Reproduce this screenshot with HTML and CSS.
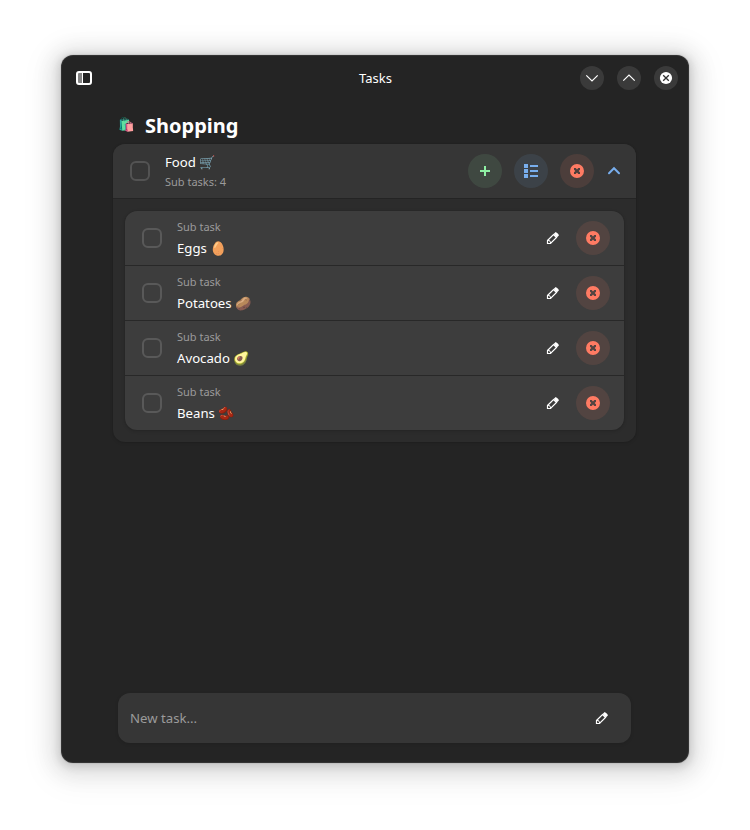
FILE: index.html
```html
<!DOCTYPE html>
<html lang="en">
<head>
<meta charset="utf-8">
<title>Tasks</title>
<link rel="stylesheet" href="styles.css">
</head>
<body>
<svg class="defs" width="0" height="0">
  <symbol id="pencil" viewBox="0 0 16 16">
    <path d="M2.500 10.500 8.500 4.500 11.500 7.500 5.500 13.500H2.500Z" fill="none" stroke="currentColor" stroke-width="1.200"/>
    <path d="M8.600 4.100 10.700 2 12.100 2.900 13.200 4 14 5.300 11.900 7.400Z" fill="currentColor"/>
    <path d="M2.800 10.200 4.700 10.700 5.800 13.200" fill="none" stroke="currentColor" stroke-width="1"/>
  </symbol>
  <symbol id="remove" viewBox="0 0 16 16">
    <path fill="currentColor" fill-rule="evenodd" d="M8 1a7 7 0 1 0 0 14A7 7 0 1 0 8 1ZM5 5h1.700L8 6.400 9.300 5H11v1.700L9.600 8 11 9.300V11H9.300L8 9.600 6.700 11H5V9.300L6.400 8 5 6.700Z"/>
  </symbol>
</svg>
<div class="window">
  <header class="titlebar">
    <svg class="sidebar-icon" width="16" height="16" viewBox="0 0 16 16"><path d="M2 2h4v12H2z" fill="#848484"/><path d="M6 2h1v12H6z" fill="#fff"/><rect x="1" y="2" width="14" height="12" rx="2" fill="none" stroke="#fff" stroke-width="2"/></svg>
    <h1 class="title">Tasks</h1>
    <div class="controls">
      <button class="control"><svg width="16" height="16" viewBox="0 0 16 16"><path d="M2.300 5.300 8 11l5.700-5.700"/></svg></button>
      <button class="control"><svg width="16" height="16" viewBox="0 0 16 16"><path d="M2.300 10.700 8 5l5.700 5.700"/></svg></button>
      <button class="control"><svg width="16" height="16" viewBox="0 0 16 16"><circle cx="8" cy="8" r="6.100" fill="#fff" stroke="none"/><path class="cross" d="m5.200 5.200 5.600 5.600m0-5.600-5.600 5.600"/></svg></button>
    </div>
  </header>
  <main class="content">
    <h2 class="heading"><span class="heading-icon">🛍️</span>Shopping</h2>
    <section class="card">
      <div class="task">
        <span class="check"></span>
        <div class="labels"><div class="name">Food 🛒</div><div class="caption">Sub tasks: 4</div></div>
        <div class="actions">
          <button class="round green"><svg width="16" height="16" viewBox="0 0 16 16"><path d="M7 3h2v4h4v2H9v4H7V9H3V7h4Z" fill="currentColor"/></svg></button>
          <button class="round blue"><svg width="16" height="16" viewBox="0 0 16 16"><path d="M1 1h4v4H1zM1 6h4v4H1zM1 11h4v4H1zM7 2h8v2H7zM7 7h8v2H7zM7 12h8v2H7z" fill="currentColor"/></svg></button>
          <button class="round red"><svg width="16" height="16"><use href="#remove"/></svg></button>
        </div>
        <svg class="expander" width="16" height="16" viewBox="0 0 16 16"><path d="m3 10.200 5-5 5 5" fill="none" stroke="currentColor" stroke-width="2" stroke-linecap="round"/></svg>
      </div>
      <ul class="subtasks">
        <li class="row"><span class="check"></span><div class="labels"><div class="caption">Sub task</div><div class="name">Eggs 🥚</div></div><svg class="edit" width="16" height="16"><use href="#pencil"/></svg><button class="round red"><svg width="16" height="16"><use href="#remove"/></svg></button></li>
        <li class="row"><span class="check"></span><div class="labels"><div class="caption">Sub task</div><div class="name">Potatoes 🥔</div></div><svg class="edit" width="16" height="16"><use href="#pencil"/></svg><button class="round red"><svg width="16" height="16"><use href="#remove"/></svg></button></li>
        <li class="row"><span class="check"></span><div class="labels"><div class="caption">Sub task</div><div class="name">Avocado 🥑</div></div><svg class="edit" width="16" height="16"><use href="#pencil"/></svg><button class="round red"><svg width="16" height="16"><use href="#remove"/></svg></button></li>
        <li class="row"><span class="check"></span><div class="labels"><div class="caption">Sub task</div><div class="name">Beans 🫘</div></div><svg class="edit" width="16" height="16"><use href="#pencil"/></svg><button class="round red"><svg width="16" height="16"><use href="#remove"/></svg></button></li>
      </ul>
    </section>
    <div class="entry"><span>New task...</span><svg class="entry-edit" width="16" height="16"><use href="#pencil"/></svg></div>
  </main>
</div>
</body>
</html>
```
FILE: styles.css
```css
* { box-sizing: border-box; }
body {
  margin: 0;
  height: 830px;
  padding: 55px 61px 67px;
  background: #fff;
  color: #fff;
  font: 13.2px/18px "Noto Sans", "Noto Color Emoji", sans-serif;
}
h1, h2, ul { margin: 0; padding: 0; }
svg { display: block; flex: none; }
button { border: 0; padding: 0; font: inherit; }
.defs { display: none; }
.window {
  height: 708px;
  display: flex;
  flex-direction: column;
  border-radius: 12px;
  background: #242424;
  box-shadow: inset 0 0 0 1px rgba(255,255,255,.07), 0 0 0 1px rgba(0,0,0,.05), 0 2px 8px 2px rgba(0,0,0,.13), 0 3px 20px 10px rgba(0,0,0,.09), 0 6px 32px 16px rgba(0,0,0,.04);
}
.titlebar {
  height: 46px;
  display: grid;
  grid-template-columns: 1fr auto 1fr;
  align-items: center;
  padding: 0 11px 0 15px;
}
.title { font-size: 13px; font-weight: 400; margin-left: -3px; }
.controls { display: flex; justify-content: flex-end; gap: 13px; }
.control {
  width: 24px; height: 24px;
  border-radius: 50%;
  background: #3a3a3a;
  display: grid;
  place-items: center;
}
.control path { fill: none; stroke: #fff; stroke-width: 1.2; }
.control .cross { stroke: #303030; stroke-width: 1.3; }
.content {
  flex: 1;
  display: flex;
  flex-direction: column;
  padding: 8px 53px 20px 52px;
}
.heading {
  height: 35px;
  display: flex;
  align-items: center;
  gap: 10px;
  padding: 0 0 2px 5px;
  font-size: 20px;
  line-height: 28px;
  font-weight: 700;
}
.heading-icon { width: 17px; font-size: 13.33px; font-weight: 400; padding-bottom: 4px; }
.card {
  border-radius: 12px;
  background: #2c2c2c;
  box-shadow: 0 0 0 1px rgba(0,0,0,.03), 0 1px 3px 1px rgba(0,0,0,.08);
}
.task {
  height: 55px;
  display: flex;
  align-items: center;
  padding: 0 14px 0 17px;
  border-radius: 12px 12px 0 0;
  background: #363636;
  border-bottom: 1px solid #242424;
}
.check {
  width: 20px; height: 20px;
  flex: none;
  border: 2px solid rgba(255,255,255,.15);
  border-radius: 6px;
}
.labels { flex: 1; margin-left: 15px; }
.caption { color: #9b9b9b; font-size: 11px; line-height: 16px; }
.task .caption { margin-top: 3px; }
.actions { display: flex; gap: 12px; }
.round {
  width: 34px; height: 34px;
  border-radius: 50%;
  display: grid;
  place-items: center;
}
.green { color: #8ff0a4; background: rgba(143,240,164,.1); }
.blue { color: #78aeed; background: rgba(120,174,237,.1); }
.red { color: #ff7b63; background: rgba(255,123,99,.11); }
.expander { margin-left: 12px; color: #78aeed; }
.subtasks {
  margin: 12px;
  overflow: hidden;
  list-style: none;
  border-radius: 12px;
  background: #3d3d3d;
  box-shadow: 0 0 0 1px rgba(0,0,0,.03), 0 1px 3px 1px rgba(0,0,0,.1);
}
.row {
  height: 55px;
  display: flex;
  align-items: center;
  padding: 0 14px 0 17px;
  border-bottom: 1px solid #282828;
}
.row:last-child { height: 54px; border: 0; }
.row .name { margin-top: 4px; }
.edit { margin-right: 15px; }
.entry {
  height: 50px;
  margin: auto 5px 0;
  display: flex;
  align-items: center;
  justify-content: space-between;
  padding: 0 21px 0 12px;
  border-radius: 12px;
  background: #363636;
  color: #9b9b9b;
  font-size: 13.2px;
  box-shadow: 0 1px 3px 1px rgba(0,0,0,.08);
}
.entry-edit { color: #fff; }
```
